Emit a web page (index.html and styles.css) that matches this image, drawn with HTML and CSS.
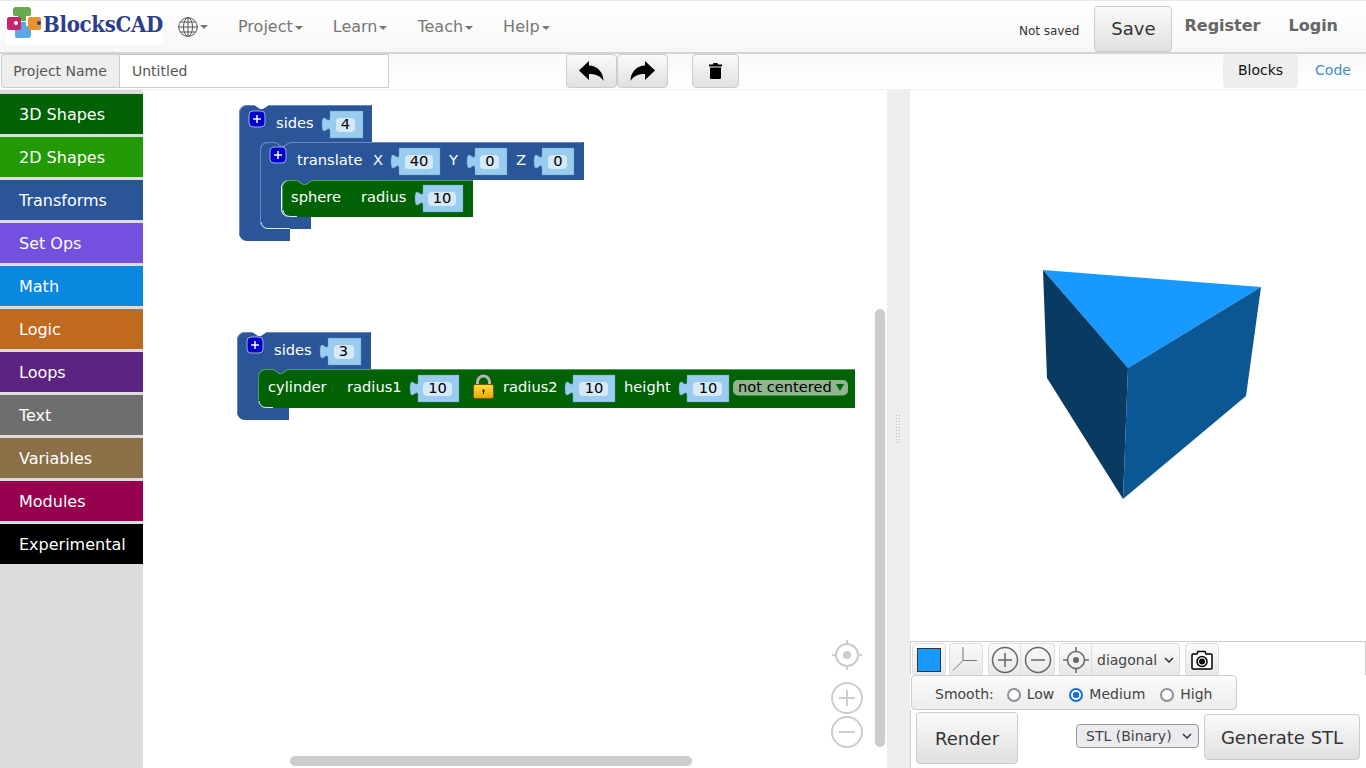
FILE: index.html
```html
<!DOCTYPE html>
<html lang="en">
<head>
    <meta charset="UTF-8">
    <title>BlocksCAD</title>
    <link rel="stylesheet" href="styles.css">
</head>
<body>

    <nav class="navbar">
        <a class="logo">
            <svg class="logo-mark" width="37" height="34" viewBox="0 0 37 34">
                <path class="logo-green" d="M10,0 h12 a3,3 0 0 1 3,3 v4 a2,2 0 0 1 -2,2 h-3 v5 h-8 v-5 h-3 a2,2 0 0 1 -2,-2 v-4 a3,3 0 0 1 3,-3 z"/>
                <path class="logo-blue" d="M12,15 h8 v4 h3 a2,2 0 0 1 2,2 v7 a3,3 0 0 1 -3,3 h-11 a2,2 0 0 1 -2,-2 v-7 a3,3 0 0 1 3,-3 h0 z"/>
                <rect class="logo-pink" x="1" y="10" width="14" height="13" rx="2"/>
                <circle class="logo-hole" cx="10" cy="16" r="2"/>
                <rect class="logo-orange" x="22" y="10" width="13" height="13" rx="2"/>
                <circle class="logo-hole-blue" cx="33" cy="16" r="2"/>
            </svg>
            <span class="logo-text">BlocksCAD</span>
        </a>
        <a class="nav-globe">
            <svg width="20" height="20" viewBox="0 0 20 20">
                <g class="globe">
                    <circle cx="10" cy="10" r="9.3"/>
                    <ellipse cx="10" cy="10" rx="4.5" ry="9.3"/>
                    <path d="M10,0.7 V19.3 M0.7,10 H19.3 M2.2,5 H17.8 M2.2,15 H17.8"/>
                </g>
            </svg>
            <span class="caret"></span>
        </a>
        <ul class="nav-menu">
            <li>Project<span class="caret"></span></li>
            <li>Learn<span class="caret"></span></li>
            <li>Teach<span class="caret"></span></li>
            <li>Help<span class="caret"></span></li>
        </ul>
        <div class="nav-right">
            <span class="save-state">Not saved</span>
            <button class="btn btn-save">Save</button>
            <a class="nav-bold nav-register">Register</a>
            <a class="nav-bold nav-login">Login</a>
        </div>
    </nav>

    <div class="subbar">
        <div class="name-group">
            <span class="name-label">Project Name</span>
            <input class="name-input" type="text" value="Untitled">
        </div>
        <div class="edit-tools">
            <button class="btn btn-edit btn-left">
                <svg width="25" height="20" viewBox="0 0 25 20"><path class="ico-fill" d="M10,0 L0,9.5 L10,19 V13 C16,13 21,14.5 24.5,20 C24.5,11 18,4.5 10,4.5 Z"/></svg>
            </button>
            <button class="btn btn-edit btn-right">
                <svg width="25" height="20" viewBox="0 0 25 20"><path class="ico-fill" d="M15,0 L25,9.5 L15,19 V13 C9,13 4,14.5 0.5,20 C0.5,11 7,4.5 15,4.5 Z"/></svg>
            </button>
            <button class="btn btn-edit btn-trash">
                <svg width="13" height="16" viewBox="0 0 13 16"><path class="ico-fill" d="M4.5,0 H8.5 L9,1.5 H13 V3.5 H0 V1.5 H4 Z M1,4.5 H12 V15 A1,1 0 0 1 11,16 H2 A1,1 0 0 1 1,15 Z"/></svg>
            </button>
        </div>
        <div class="view-tabs">
            <a class="tab tab-active">Blocks</a>
            <a class="tab tab-link">Code</a>
        </div>
    </div>

    <div class="main">
        <ul class="toolbox">
            <li class="cat cat-3d">3D Shapes</li>
            <li class="cat cat-2d">2D Shapes</li>
            <li class="cat cat-transforms">Transforms</li>
            <li class="cat cat-setops">Set Ops</li>
            <li class="cat cat-math">Math</li>
            <li class="cat cat-logic">Logic</li>
            <li class="cat cat-loops">Loops</li>
            <li class="cat cat-text">Text</li>
            <li class="cat cat-vars">Variables</li>
            <li class="cat cat-modules">Modules</li>
            <li class="cat cat-exp">Experimental</li>
        </ul>

        <div class="workspace">
            <svg class="blocks" width="744" height="678" viewBox="143 90 744 678">
                <defs>
                    <linearGradient id="lockGold" x1="0" y1="0" x2="0" y2="1">
                        <stop offset="0" stop-color="#ffe23c"/>
                        <stop offset="1" stop-color="#f0a400"/>
                    </linearGradient>
                </defs>
                <!-- sides 4 -->
                <path class="blk-blue" d="M239,113 a8,8 0 0 1 8,-8 h7 l6,4 3,0 6,-4 H372 V142 H290 l-6,4 -3,0 -6,-4 H268 a8,8 0 0 0 -8,8 V221 a8,8 0 0 0 8,8 H290 V241 H247 a8,8 0 0 1 -8,-8 Z"/>
                <path class="hl-blue" d="M239.5,233 V113 a7.5,7.5 0 0 1 7.5,-7.5 h7 M269,105.5 H371"/>
                <!-- translate -->
                <path class="blk-blue" d="M260,150 a8,8 0 0 1 8,-8 h7 l6,4 3,0 6,-4 H584 V180 H312 l-6,4 -3,0 -6,-4 H289 a8,8 0 0 0 -8,8 V209 a8,8 0 0 0 8,8 H311 V229 H268 a8,8 0 0 1 -8,-8 Z"/>
                <path class="hl-blue" d="M260.5,221 V150 a7.5,7.5 0 0 1 7.5,-7.5 h7 l6,4 3,0 6,-4 H583"/>
                <path class="hl-white" d="M261,222 a7,7 0 0 0 7,6.5 H290"/>
                <!-- sphere -->
                <path class="blk-green" d="M282,188 a8,8 0 0 1 8,-8 h7 l6,4 3,0 6,-4 H473 V217 H290 a8,8 0 0 1 -8,-8 Z"/>
                <path class="hl-green" d="M282.5,209 V188 a7.5,7.5 0 0 1 7.5,-7.5 h7 l6,4 3,0 6,-4 H473"/>
                <path class="hl-white" d="M283,210 a7,7 0 0 0 7,6.5 H297"/>

                <!-- sides 3 -->
                <path class="blk-blue" d="M237,340 a8,8 0 0 1 8,-8 h7 l6,4 3,0 6,-4 H371 V369 H288 l-6,4 -3,0 -6,-4 H266 a8,8 0 0 0 -8,8 V400 a8,8 0 0 0 8,8 H289 V420 H245 a8,8 0 0 1 -8,-8 Z"/>
                <path class="hl-blue" d="M237.5,412 V340 a7.5,7.5 0 0 1 7.5,-7.5 h7 M267,332.5 H370"/>
                <!-- cylinder -->
                <path class="blk-green" d="M258,377 a8,8 0 0 1 8,-8 h7 l6,4 3,0 6,-4 H855 V408 H266 a8,8 0 0 1 -8,-8 Z"/>
                <path class="hl-green" d="M258.5,400 V377 a7.5,7.5 0 0 1 7.5,-7.5 h7 l6,4 3,0 6,-4 H855"/>
                <path class="hl-white" d="M259,401 a7,7 0 0 0 7,6.5 H273"/>

                <g class="plus" transform="translate(249,111)"><rect width="16" height="16" rx="4"/><path d="M8,4 V12 M4,8 H12"/></g>
                <g class="plus" transform="translate(270,147)"><rect width="16" height="16" rx="4"/><path d="M8,4 V12 M4,8 H12"/></g>
                <g class="plus" transform="translate(247,337)"><rect width="16" height="16" rx="4"/><path d="M8,4 V12 M4,8 H12"/></g>

                <text class="lbl" x="276" y="128">sides</text>
                <text class="lbl" x="297" y="165">translate</text>
                <text class="lbl" x="373" y="165">X</text>
                <text class="lbl" x="449" y="165">Y</text>
                <text class="lbl" x="516" y="165">Z</text>
                <text class="lbl" x="291" y="202">sphere</text>
                <text class="lbl" x="361" y="202">radius</text>
                <text class="lbl" x="274" y="355">sides</text>
                <text class="lbl" x="268" y="392">cylinder</text>
                <text class="lbl" x="347" y="392">radius1</text>
                <text class="lbl" x="503" y="392">radius2</text>
                <text class="lbl" x="624" y="392">height</text>

                <g transform="translate(330,111)">
                    <path class="val" d="M0,0 H33 V27 H0 V21 c0,-10 -8,8 -8,-7.5 s8,2.5 8,-7.5 Z"/>
                    <rect class="fld" x="6" y="7" width="19" height="14" rx="4"/>
                    <text class="num" x="15.5" y="18">4</text>
                </g>
                <g transform="translate(399,148)">
                    <path class="val" d="M0,0 H41 V27 H0 V21 c0,-10 -8,8 -8,-7.5 s8,2.5 8,-7.5 Z"/>
                    <rect class="fld" x="6" y="7" width="28" height="14" rx="4"/>
                    <text class="num" x="20" y="18">40</text>
                </g>
                <g transform="translate(475,148)">
                    <path class="val" d="M0,0 H32 V27 H0 V21 c0,-10 -8,8 -8,-7.5 s8,2.5 8,-7.5 Z"/>
                    <rect class="fld" x="5" y="7" width="19" height="14" rx="4"/>
                    <text class="num" x="15" y="18">0</text>
                </g>
                <g transform="translate(542,148)">
                    <path class="val" d="M0,0 H32 V27 H0 V21 c0,-10 -8,8 -8,-7.5 s8,2.5 8,-7.5 Z"/>
                    <rect class="fld" x="6" y="7" width="19" height="14" rx="4"/>
                    <text class="num" x="16" y="18">0</text>
                </g>
                <g transform="translate(423,185)">
                    <path class="val" d="M0,0 H40 V27 H0 V21 c0,-10 -8,8 -8,-7.5 s8,2.5 8,-7.5 Z"/>
                    <rect class="fld" x="5" y="7" width="28" height="14" rx="4"/>
                    <text class="num" x="19" y="18">10</text>
                </g>
                <g transform="translate(328,338)">
                    <path class="val" d="M0,0 H33 V27 H0 V21 c0,-10 -8,8 -8,-7.5 s8,2.5 8,-7.5 Z"/>
                    <rect class="fld" x="6" y="7" width="20" height="14" rx="4"/>
                    <text class="num" x="15.5" y="18">3</text>
                </g>
                <g transform="translate(418,375)">
                    <path class="val" d="M0,0 H41 V27 H0 V21 c0,-10 -8,8 -8,-7.5 s8,2.5 8,-7.5 Z"/>
                    <rect class="fld" x="5" y="7" width="29" height="14" rx="4"/>
                    <text class="num" x="19.5" y="18">10</text>
                </g>
                <g transform="translate(573,375)">
                    <path class="val" d="M0,0 H42 V27 H0 V21 c0,-10 -8,8 -8,-7.5 s8,2.5 8,-7.5 Z"/>
                    <rect class="fld" x="6" y="7" width="29" height="14" rx="4"/>
                    <text class="num" x="21" y="18">10</text>
                </g>
                <g transform="translate(687,375)">
                    <path class="val" d="M0,0 H42 V27 H0 V21 c0,-10 -8,8 -8,-7.5 s8,2.5 8,-7.5 Z"/>
                    <rect class="fld" x="6" y="7" width="29" height="14" rx="4"/>
                    <text class="num" x="21" y="18">10</text>
                </g>

                <!-- lock -->
                <g transform="translate(473,374)">
                    <path class="lock-arc" d="M4.5,11 V8 a6,6 0 0 1 12,0 V11"/>
                    <rect class="lock-body" x="0.5" y="10.5" width="20" height="14" rx="2" fill="url(#lockGold)"/>
                    <path class="lock-key" d="M9.5,15.5 h2 v2 l-0.5,0.5 v2 h-1 v-2 l-0.5,-0.5 z"/>
                </g>

                <!-- not centered -->
                <rect class="drop" x="733" y="380" width="115" height="15.5" rx="5"/>
                <text class="drop-text" x="738" y="392">not centered</text>
                <path class="drop-arrow" d="M836,384 H844 L840,391 Z"/>

                <!-- zoom controls -->
                <g class="zoom-ctl">
                    <circle cx="847" cy="655" r="11"/>
                    <circle class="zoom-dot" cx="847" cy="655" r="4"/>
                    <path d="M847,640 V644 M847,666 V670 M832,655 H836 M858,655 H862"/>
                    <circle cx="847" cy="698" r="15"/>
                    <path d="M847,690 V706 M839,698 H855"/>
                    <circle cx="847" cy="732" r="15"/>
                    <path d="M839,732 H855"/>
                </g>
            </svg>
            <div class="scroll-v"></div>
            <div class="scroll-h"></div>
        </div>

        <div class="splitter"><span class="grip"></span></div>

        <div class="viewer">
            <div class="stage">
                <svg width="456" height="551" viewBox="910 90 456 551">
                    <polygon class="face-top" points="1043,270 1261,287 1128,368"/>
                    <polygon class="face-left" points="1043,270 1128,368 1123,499 1047,378"/>
                    <polygon class="face-right" points="1128,368 1261,287 1246,396 1123,499"/>
                </svg>
            </div>
            <div class="view-row">
                <button class="vbtn vbtn-color"><span class="swatch"></span></button>
                <button class="vbtn vbtn-axes">
                    <svg width="30" height="30" viewBox="0 0 30 30"><path class="ico-thin" d="M12,2 V15.5 H26 M12,15.5 L2,25.5"/></svg>
                </button>
                <button class="vbtn vbtn-plus">
                    <svg width="28" height="28" viewBox="0 0 28 28"><circle class="ico-line" cx="14" cy="14" r="12.5"/><path class="ico-line" d="M14,7 V21 M7,14 H21"/></svg>
                </button>
                <button class="vbtn vbtn-minus">
                    <svg width="28" height="28" viewBox="0 0 28 28"><circle class="ico-line" cx="14" cy="14" r="12.5"/><path class="ico-line" d="M7,14 H21"/></svg>
                </button>
                <button class="vbtn vbtn-center">
                    <svg width="28" height="28" viewBox="0 0 28 28"><circle class="ico-line" cx="14" cy="14" r="8.5"/><circle class="ico-dot" cx="14" cy="14" r="3"/><path class="ico-line" d="M14,1 V5 M14,23 V27 M1,14 H5 M23,14 H27"/></svg>
                </button>
                <select class="view-select"><option>diagonal</option></select>
                <button class="vbtn vbtn-camera">
                    <svg width="22" height="20" viewBox="0 0 22 20"><path class="cam" d="M2,4 H6 L7,1.5 H14 L15,4 H20 A1,1 0 0 1 21,5 V18 A1,1 0 0 1 20,19 H2 A1,1 0 0 1 1,18 V5 A1,1 0 0 1 2,4 Z"/><circle class="cam" cx="11" cy="11.5" r="5"/><circle class="ico-fill" cx="11" cy="11.5" r="3"/></svg>
                </button>
            </div>
            <div class="smooth-row">
                <span class="smooth-title">Smooth:</span>
                <label class="smooth-opt"><input type="radio" name="smooth">Low</label>
                <label class="smooth-opt"><input type="radio" name="smooth" checked>Medium</label>
                <label class="smooth-opt"><input type="radio" name="smooth">High</label>
            </div>
            <div class="render-row">
                <button class="btn btn-render">Render</button>
                <select class="stl-select"><option>STL (Binary)</option></select>
                <button class="btn btn-generate">Generate STL</button>
            </div>
        </div>
    </div>

</body>
</html>
```

FILE: styles.css
```css
* {
    box-sizing: border-box;
}

html, body {
    height: 100%;
}

body {
    margin: 0;
    height: 768px;
    overflow: hidden;
    display: flex;
    flex-direction: column;
    font-family: "DejaVu Sans", sans-serif;
    font-size: 14px;
    color: #555;
    background: #fff;
}

ul {
    list-style: none;
    margin: 0;
    padding: 0;
}

/* top nav */
.navbar {
    height: 54px;
    flex: none;
    display: flex;
    align-items: center;
    border-top: 1px solid #e7e7e7;
    border-bottom: 2px solid #d4d4d4;
    background: linear-gradient(to bottom, #ffffff, #f7f7f7);
}

.logo {
    width: 157px;
    height: 40px;
    margin-left: 6px;
    margin-top: 4px;
    align-self: flex-start;
    background: #fff;
    position: relative;
}

.logo-mark {
    position: absolute;
    left: 0;
    top: 2px;
}

.logo-text {
    position: absolute;
    left: 37px;
    top: 6px;
    font-family: "DejaVu Serif", serif;
    font-stretch: condensed;
    font-weight: bold;
    font-size: 22px;
    letter-spacing: -0.3px;
    color: #2b3d8b;
}

.logo-green { fill: #6aaa4f; }
.logo-blue { fill: #5aa9e6; }
.logo-pink { fill: #c9256f; }
.logo-orange { fill: #e8912d; }
.logo-hole { fill: #fff; }
.logo-hole-blue { fill: #2b3d8b; }

.nav-globe {
    margin-left: 15px;
    display: flex;
    align-items: center;
}

.globe {
    fill: none;
    stroke: #555;
    stroke-width: 1;
}

.caret {
    display: inline-block;
    width: 0;
    height: 0;
    margin-left: 2px;
    border-top: 4px solid #777;
    border-left: 4px solid transparent;
    border-right: 4px solid transparent;
    vertical-align: middle;
}

.nav-menu {
    display: flex;
    margin-left: 30px;
    gap: 30px;
    font-size: 16px;
    color: #777;
}

.nav-right {
    margin-left: auto;
    padding-top: 5px;
    display: flex;
    align-items: center;
}

.save-state {
    font-size: 12px;
    color: #333;
    margin-top: 3px;
}

.btn {
    font-family: inherit;
    color: #333;
    background: linear-gradient(to bottom, #fafafa, #e0e0e0);
    border: 1px solid #ccc;
    border-radius: 4px;
    padding: 0;
}

.btn-save {
    width: 78px;
    height: 46px;
    margin-left: 15px;
    padding-bottom: 2px;
    font-size: 18px;
}

.nav-bold {
    font-weight: bold;
    font-size: 16px;
    color: #666;
    margin-bottom: 8px;
}

.nav-register {
    margin-left: 12px;
}

.nav-login {
    margin-left: 28px;
    margin-right: 28px;
}

/* second bar */
.subbar {
    height: 36px;
    flex: none;
    display: flex;
    background: linear-gradient(to bottom, #f9f9f9, #ffffff);
    border-bottom: 1px solid #eee;
}

.name-group {
    display: flex;
    width: 388px;
    height: 34px;
    margin-left: 1px;
}

.name-label {
    width: 118px;
    display: flex;
    align-items: center;
    justify-content: center;
    padding-right: 1px;
    background: #eee;
    border: 1px solid #ccc;
    border-right: 0;
    border-radius: 4px 0 0 4px;
    color: #555;
}

.name-input {
    flex: 1;
    border: 1px solid #ccc;
    padding: 0 12px;
    font-family: inherit;
    font-size: 14px;
    color: #555;
    min-width: 0;
}

.edit-tools {
    display: flex;
    height: 34px;
    margin-left: 177px;
}

.btn-edit {
    display: flex;
    align-items: center;
    justify-content: center;
    height: 34px;
}

.btn-left {
    width: 51px;
}

.btn-right {
    width: 51px;
}

.btn-trash {
    width: 47px;
    margin-left: 24px;
}

.ico-fill {
    fill: #000;
}

.view-tabs {
    margin-left: auto;
    display: flex;
}

.tab {
    height: 34px;
    padding-bottom: 2px;
    display: flex;
    align-items: center;
    justify-content: center;
    color: #111;
}

.tab-active {
    width: 75px;
    background: #eee;
    border-radius: 4px;
}

.tab-link {
    width: 68px;
    padding-left: 2px;
    color: #428bca;
}

/* main area */
.main {
    flex: 1;
    display: flex;
    min-height: 0;
}

.toolbox {
    width: 143px;
    flex: none;
    background: #ddd;
    padding-top: 4px;
    display: flex;
    flex-direction: column;
    gap: 3px;
}

.cat {
    height: 40px;
    padding-left: 19px;
    display: flex;
    align-items: center;
    font-size: 16px;
    color: #fff;
}

.cat-3d { background: #006205; }
.cat-2d { background: #229a05; }
.cat-transforms { background: #2a5599; }
.cat-setops { background: #7450e0; }
.cat-math { background: #0a88e0; }
.cat-logic { background: #c06a20; }
.cat-loops { background: #5d2383; }
.cat-text { background: #6e6e6e; }
.cat-vars { background: #8b6f47; }
.cat-modules { background: #96004f; }
.cat-exp { background: #000; }

.workspace {
    width: 744px;
    flex: none;
    position: relative;
    background: #fff;
    overflow: hidden;
}

.blocks {
    display: block;
}

.blk-blue { fill: #2a5599; }
.blk-green { fill: #006205; }
.hl-blue { fill: none; stroke: #6a88ba; }
.hl-green { fill: none; stroke: #549a58; }
.hl-white { fill: none; stroke: #dfe8f0; }

.plus rect {
    fill: #0000cc;
    stroke: #a0a8e0;
}

.plus path {
    fill: none;
    stroke: #fff;
    stroke-width: 1.5;
}

.lbl {
    font-family: "DejaVu Sans", sans-serif;
    font-size: 14.67px;
    fill: #fff;
}

.val {
    fill: #99ccee;
    stroke: #5e93b8;
    stroke-width: 0.4;
}

.fld {
    fill: #d6e9f8;
}

.num {
    font-family: "DejaVu Sans", sans-serif;
    font-size: 14.67px;
    fill: #000;
    text-anchor: middle;
}

.lock-arc {
    fill: none;
    stroke: #b5b5b5;
    stroke-width: 3;
}

.lock-body {
    stroke: #7a5a00;
}

.lock-key {
    fill: #222;
}

.drop {
    fill: #8fb58f;
}

.drop-text {
    font-family: "DejaVu Sans", sans-serif;
    font-size: 14.67px;
    fill: #000;
}

.drop-arrow {
    fill: #006205;
}

.zoom-ctl {
    fill: none;
    stroke: #ccc;
    stroke-width: 2;
}

.zoom-dot {
    fill: #ccc;
    stroke: none;
}

.scroll-v {
    position: absolute;
    left: 732px;
    top: 219px;
    width: 10px;
    height: 438px;
    background: #ccc;
    border-radius: 5px;
}

.scroll-h {
    position: absolute;
    left: 147px;
    top: 666px;
    width: 402px;
    height: 10px;
    background: #ccc;
    border-radius: 5px;
}

.splitter {
    width: 23px;
    flex: none;
    background: #eee;
    display: flex;
    align-items: center;
    justify-content: center;
}

.grip {
    width: 7px;
    height: 30px;
    background-image: radial-gradient(#bbb 1px, transparent 1px);
    background-size: 3px 3px;
}

/* render pane */
.viewer {
    flex: 1;
    display: flex;
    flex-direction: column;
    min-width: 0;
    background: #fff;
}

.stage {
    height: 551px;
    flex: none;
}

.stage svg {
    display: block;
}

.face-top { fill: #1799ff; }
.face-left { fill: #083a62; }
.face-right { fill: #0b5794; }

.view-row {
    height: 34px;
    flex: none;
    display: flex;
    padding: 1px 0 0 1px;
    border-top: 1px solid #ccc;
    border-left: 1px solid #ccc;
    border-right: 1px solid #ccc;
    align-items: flex-start;
}

.vbtn {
    width: 34px;
    height: 33px;
    flex: none;
    padding: 0;
    display: flex;
    align-items: center;
    justify-content: center;
    background: linear-gradient(to bottom, #fafafa, #e8e8e8);
    border: 1px solid #ddd;
    border-radius: 4px;
}

.vbtn-axes {
    margin-left: 3px;
}

.vbtn-plus {
    width: 33px;
    margin-left: 5px;
    border-radius: 4px 0 0 4px;
}

.vbtn-minus {
    border-radius: 0 4px 4px 0;
    border-left: 0;
}

.vbtn-center {
    width: 33px;
    margin-left: 4px;
    border-radius: 4px 0 0 4px;
}

.vbtn-camera {
    margin-left: 5px;
}

.swatch {
    width: 24px;
    height: 24px;
    background: #1799ff;
    border: 1px solid #333;
}

.ico-line {
    fill: none;
    stroke: #666;
    stroke-width: 1.5;
}

.ico-thin {
    fill: none;
    stroke: #777;
    stroke-width: 1;
}

.ico-dot {
    fill: #666;
}

.cam {
    fill: #fff;
    stroke: #000;
    stroke-width: 1.5;
}

.view-select {
    width: 88px;
    height: 33px;
    padding-left: 5px;
    appearance: none;
    font-family: inherit;
    font-size: 14px;
    color: #444;
    background: url("data:image/svg+xml,%3Csvg xmlns='http://www.w3.org/2000/svg' width='10' height='6'%3E%3Cpath d='M1,1 L5,5 L9,1' fill='none' stroke='%23333' stroke-width='1.5'/%3E%3C/svg%3E") no-repeat right 5px center, linear-gradient(to bottom, #fafafa, #e8e8e8);
    border: 1px solid #ddd;
    border-left: 0;
    border-radius: 0 4px 4px 0;
}

.smooth-row {
    width: 326px;
    height: 35px;
    flex: none;
    margin-left: 1px;
    position: relative;
    display: flex;
    align-items: center;
    padding: 2px 0 0 23px;
    font-size: 14px;
    color: #444;
    background: linear-gradient(to bottom, #fbfbfb, #ececec);
    border: 1px solid #ccc;
    border-radius: 4px;
}

.smooth-title {
    margin-right: 9px;
}

.smooth-opt {
    display: flex;
    align-items: center;
    margin-right: 11px;
}

.smooth-opt input {
    appearance: none;
    width: 14px;
    height: 14px;
    margin: 3px 6px 0 4px;
    background: #fff;
    border: 2px solid #8f8f9d;
    border-radius: 50%;
}

.smooth-opt input:checked {
    border-color: #1a6fe0;
    background: radial-gradient(circle, #1a6fe0 3px, #fff 3.5px);
}

.render-row {
    flex: 1;
    display: flex;
    align-items: flex-start;
    border-left: 1px solid #ccc;
}

.btn-render {
    width: 102px;
    height: 52px;
    margin: 2px 0 0 5px;
    font-size: 18px;
}

.stl-select {
    width: 123px;
    height: 24px;
    margin: 14px 0 0 58px;
    padding-left: 9px;
    appearance: none;
    font-family: inherit;
    font-size: 14px;
    color: #444;
    background: #ebebef url("data:image/svg+xml,%3Csvg xmlns='http://www.w3.org/2000/svg' width='10' height='6'%3E%3Cpath d='M1,1 L5,5 L9,1' fill='none' stroke='%23333' stroke-width='1.5'/%3E%3C/svg%3E") no-repeat right 6px center;
    border: 1px solid #999;
    border-radius: 4px;
}

.btn-generate {
    width: 156px;
    height: 46px;
    margin: 4px 0 0 5px;
    font-size: 18px;
}
```
